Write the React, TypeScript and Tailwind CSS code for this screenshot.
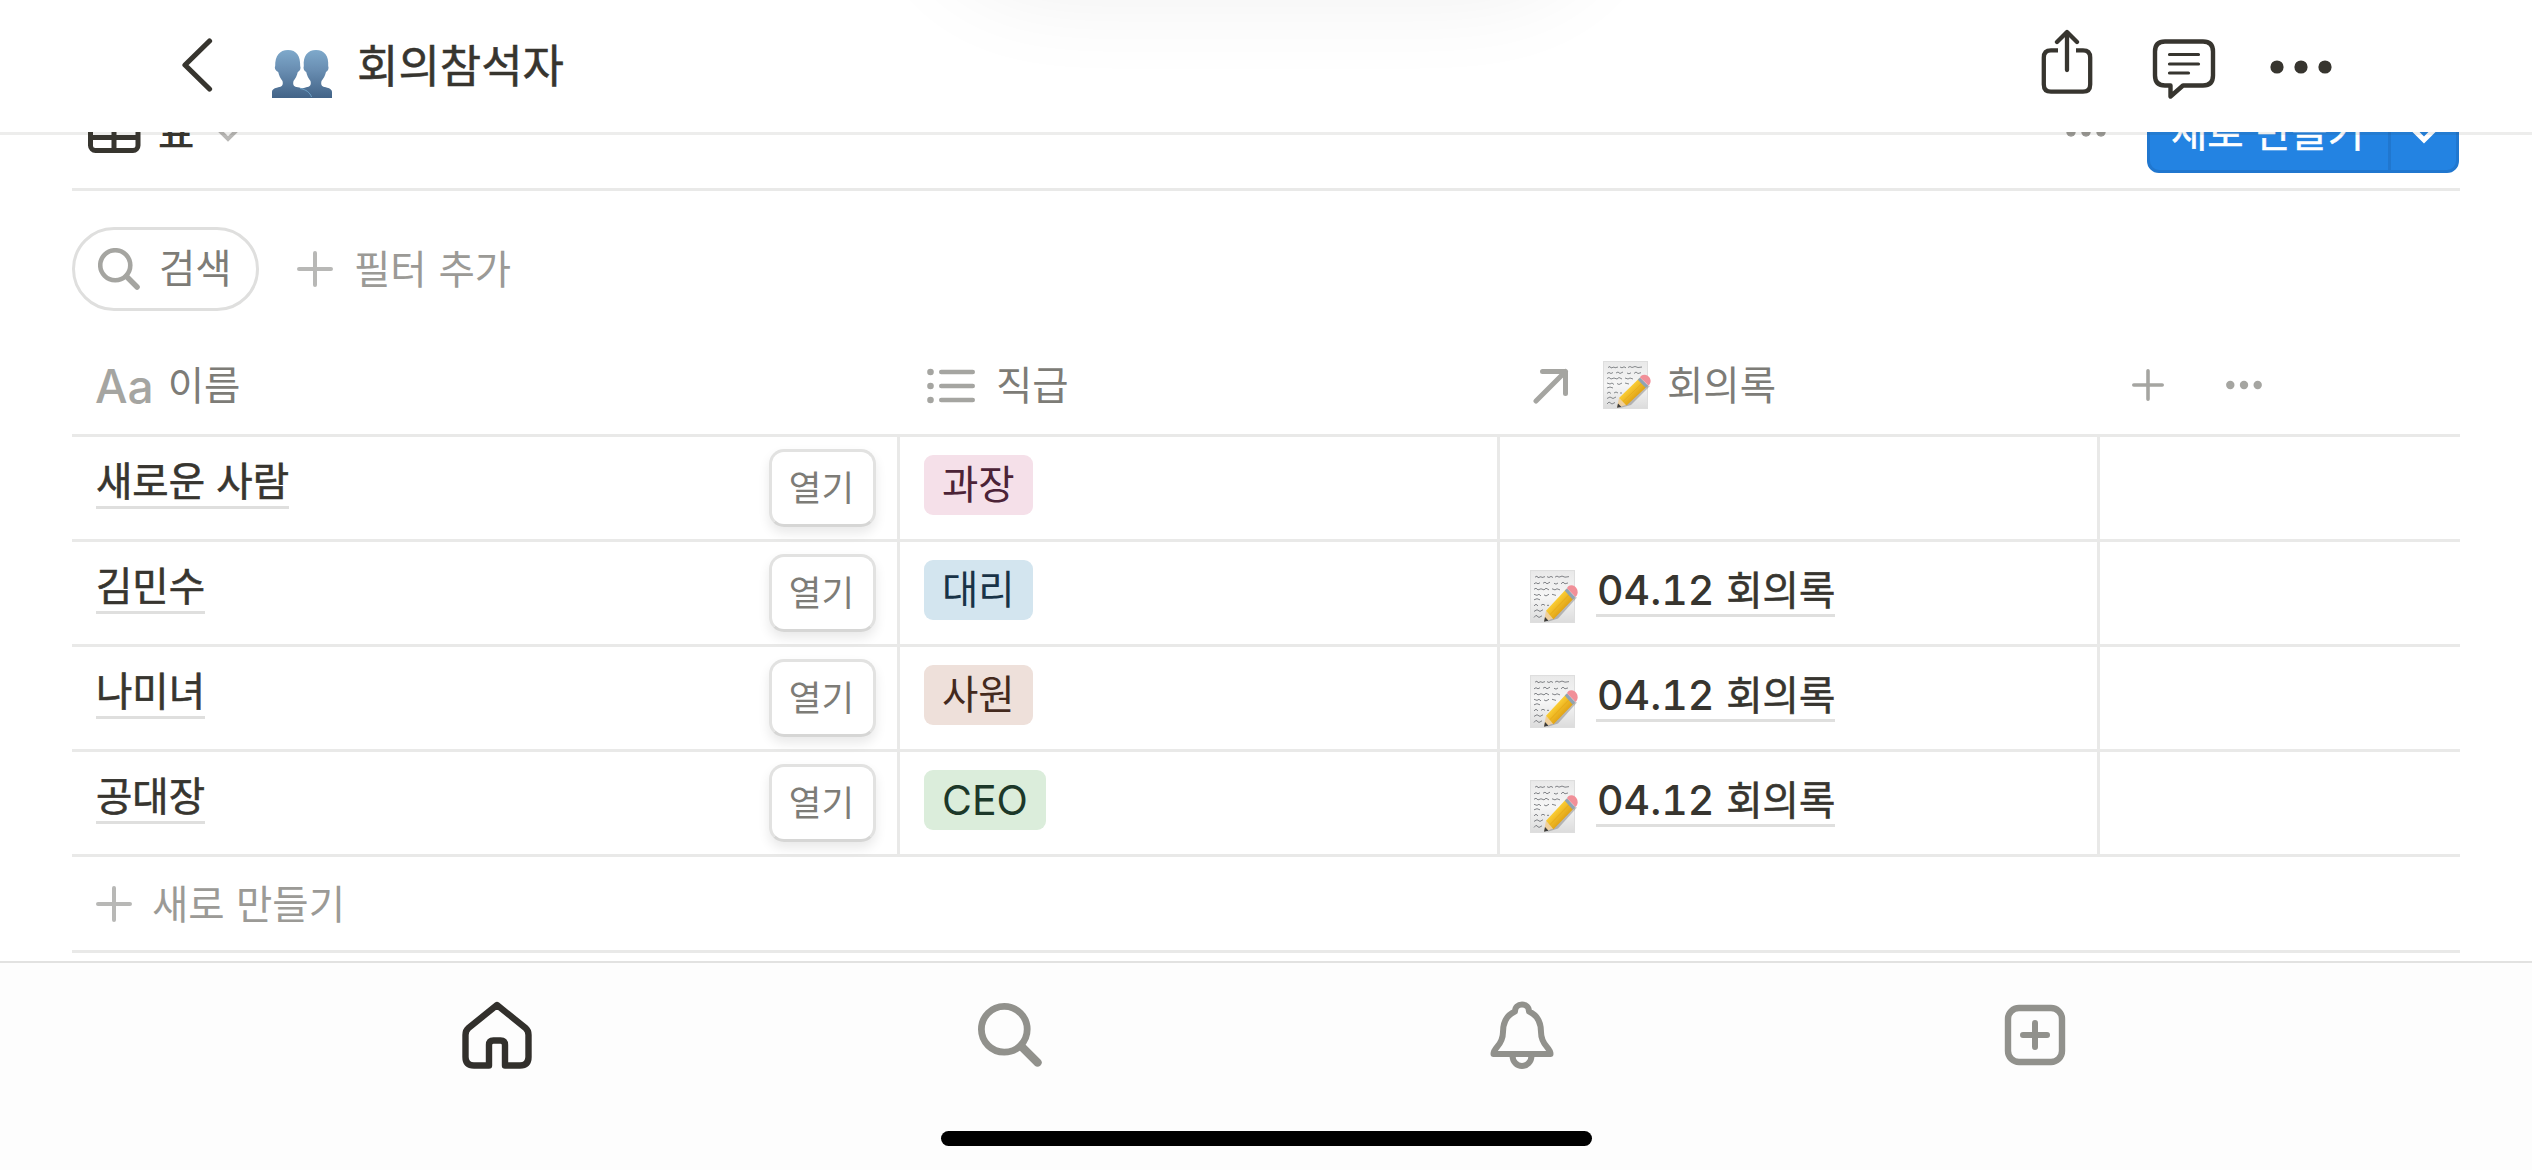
import type { ReactNode } from "react";

type Row = {
  name: string;
  tag: string;
  tagClass: string;
  meeting?: string;
};

const rows: Row[] = [
  { name: "새로운 사람", tag: "과장", tagClass: "bg-[#f5e0e9] text-[#4c2337]" },
  { name: "김민수", tag: "대리", tagClass: "bg-[#d3e5ef] text-[#183347]", meeting: "회의록" },
  { name: "나미녀", tag: "사원", tagClass: "bg-[#eee0da] text-[#442a1e]", meeting: "회의록" },
  { name: "공대장", tag: "CEO", tagClass: "bg-[#dbeddb] text-[#1c3829] text-[41px]", meeting: "회의록" },
];

const PeopleEmoji = () => (
  <svg width="60" height="48" viewBox="0 0 60 48">
    <defs>
      <linearGradient id="people" x1="0" y1="0" x2="0" y2="1">
        <stop offset="0" stopColor="#7ea9cb" />
        <stop offset="0.4" stopColor="#6a8fb3" />
        <stop offset="1" stopColor="#426387" />
      </linearGradient>
    </defs>
    <path
      fill="url(#people)"
      d="M28 48V42C28 38.5 32 38 35.500 37C38.500 36.200 39.300 34.500 38.500 31C36.500 28.500 35 25.500 34.200 22C32 21 31 18.500 31.800 16C31 6 35.500 0 44 0C52.500 0 57 6 56.200 16C57.200 18.500 56 21 54 22C53.200 25.500 51.500 28.500 49.500 31C48.700 34.500 49.500 36.200 52.500 37C56 38 60 38.500 60 42V48Z"
    />
    <path
      fill="url(#people)"
      d="M0 48V42C0 38.500 4 38 7.500 37C10.500 36.200 11.300 34.500 10.500 31C8.500 28.500 7 25.500 6.200 22C4 21 2 18.500 3.200 16C3 6 7.500 0 16 0C24.500 0 28.500 6 28.200 16C29.200 18.500 28 21 25.800 22C25 25.500 23.500 28.500 21.500 31C20.700 34.500 21.500 36.200 24.500 37C32 38 37.500 41 39.500 48Z"
    />
    <path d="M28 38.500C34 39.500 38 42.500 39.500 47" fill="none" stroke="#6fa3c9" strokeWidth="1" />
  </svg>
);

const MemoEmoji = ({ className }: { className?: string }) => (
  <svg viewBox="0 0 48 48" preserveAspectRatio="none" className={className}>
    <defs>
      <linearGradient id="pencil" x1="0" y1="0" x2="1" y2="1">
        <stop offset="0.3" stopColor="#ffd53a" />
        <stop offset="0.7" stopColor="#dd9c10" />
      </linearGradient>
      <linearGradient id="paper" x1="0" y1="0" x2="0" y2="1">
        <stop offset="0" stopColor="#e9e9e9" />
        <stop offset="0.5" stopColor="#f6f6f6" />
        <stop offset="1" stopColor="#dcdcdc" />
      </linearGradient>
    </defs>
    <rect x="0.500" y="0.500" width="44" height="47" fill="url(#paper)" stroke="#dedede" />
    <g fill="none" stroke="#6b6e72" strokeWidth="0.800">
      <path d="M5 6.500l2-1 1 1.500 3-1 1 .8 3-.8M17 6l2 .8 2-1 2 1M25 6.500l2-1 2 1 3-1 3 1 4-.5" />
      <path d="M4 12.500l2-1 2 1 2-1M13 12l2-1 2 1.500 3-1.500M24 12l2 .8 2-1M31 12.500l2-1.500 2 1.500 3-.8" />
      <path d="M4 17.500l2-1 2 1.500 3-1 3 1 2-1.500 3 1.500M22 17l3 1 2-1 3 1" />
      <path d="M4 22l3 1 2-1 2 1.500M14 22.500l2 1 3-1.500M22 22l4 1" />
      <path d="M4 27l3-1 3 1M4 32.500l2-1.500 2 1.500M11 32l2-1 2 1M17 32h2" />
      <path d="M4 37.500l3-1.500 3 1.500 3-1.500M4 43l2-2 3 2 3-1.500" />
    </g>
    <path d="M17 47L44 24L47 25L28 44Z" fill="#555" opacity="0.35" />
    <path d="M14 46.500L16 37L23.500 44Z" fill="#efcf9c" />
    <path d="M14 46.800L15 42.500L18.500 46Z" fill="#3b3b3b" />
    <path d="M16 37L36 17.500L44 25.500L23.500 44.500Z" fill="url(#pencil)" />
    <path d="M20 40.500L40 21.500" stroke="#e8ae1c" strokeWidth="1" />
    <path d="M34.800 18.800L37 16.500L45 24.500L42.800 27Z" fill="#8fa3b3" />
    <path d="M37 16.500C38 13.500 42 12.800 45 15C48 17.500 48.800 21.500 45.500 24.500Z" fill="#f18f98" />
  </svg>
);

const Plus = ({ size, className }: { size: number; className: string }) => (
  <svg width={size} height={size} viewBox="0 0 36 36" className={className}>
    <path d="M18 2V34M2 18H34" stroke="currentColor" strokeWidth="4" strokeLinecap="round" />
  </svg>
);

const SearchIcon = ({ size, className, weight }: { size: number; className?: string; weight: number }) => (
  <svg width={size} height={size} viewBox="0 0 64 64" fill="none" stroke="currentColor" className={className}>
    <circle cx="26.300" cy="26.300" r="22.900" strokeWidth={weight} />
    <path d="M43.500 43.500L59.500 59.500" strokeWidth={weight + 1.4} strokeLinecap="round" />
  </svg>
);

const TopBar = () => (
  <header className="relative z-10 flex h-[132px] shrink-0 items-center bg-white pl-[181px] shadow-[0_3px_0_rgba(55,53,47,0.09)]">
    {/* soft glow hanging from the top edge */}
    <div className="absolute left-1/2 top-0 h-[110px] w-[1000px] -translate-x-1/2 overflow-hidden">
      <div className="mx-auto -mt-[410px] h-[400px] w-[670px] rounded-[120px] shadow-[0_0_100px_rgba(0,0,0,0.075)]" />
    </div>
    <svg width="32" height="56" viewBox="0 0 32 56" fill="none" className="-mt-[2px]">
      <path d="M28.500 4L4 28L28.500 52" stroke="#37352f" strokeWidth="5.200" strokeLinecap="round" strokeLinejoin="round" />
    </svg>
    <div className="ml-[59px] mt-[16px]">
      <PeopleEmoji />
    </div>
    <h1 className="-mt-[5px] ml-[25px] text-[45px] leading-[60px] text-[#37352f] [-webkit-text-stroke:0.5px]">회의참석자</h1>
    <div className="ml-auto mr-[200px] flex items-center">
      <svg width="52" height="66" viewBox="0 0 52 66" fill="none" stroke="#37352f" strokeWidth="4.300" className="-mt-[8px]">
        <path d="M17 21.300H10Q2.800 21.300 2.800 28.500V55.500Q2.800 62.700 10 62.700H42Q49.200 62.700 49.200 55.500V28.500Q49.200 21.300 42 21.300H35" />
        <path d="M26 41V3.500M16 13L26 3L36 13" strokeLinecap="round" strokeLinejoin="round" />
      </svg>
      <svg width="64" height="60" viewBox="0 0 64 60" fill="none" stroke="#37352f" strokeLinecap="round" strokeLinejoin="round" className="ml-[59px] mt-[6px]">
        <path d="M13 2.500H51Q61 2.500 61 12.500V36.500Q61 46.500 51 46.500H31L18.500 57.500V46.500H13Q3 46.500 3 36.500V12.500Q3 2.500 13 2.500Z" strokeWidth="4.400" />
        <path d="M17.500 15.500H46.500M17.500 25H46.500M17.500 34H36.500" strokeWidth="3.200" />
      </svg>
      <svg width="62" height="14" viewBox="0 0 62 14" fill="#37352f" className="ml-[54px] mt-px">
        <circle cx="7" cy="7" r="6.600" />
        <circle cx="31" cy="7" r="6.600" />
        <circle cx="55" cy="7" r="6.600" />
      </svg>
    </div>
  </header>
);

const ViewBar = () => (
  <div className="-mt-[43px] flex h-[102px] shrink-0 items-start border-b-[3px] border-[#e9e9e8] text-[39.500px] leading-[84px]">
    <svg width="54" height="44" viewBox="0 0 54 44" fill="none" stroke="#37352f" strokeWidth="5" className="ml-[15px] mt-[20px]">
      <rect x="3.500" y="2.500" width="47.500" height="39" rx="5" />
      <path d="M3.500 15H51M3.500 28.500H51M27 15V41" />
    </svg>
    <span className="ml-[17px] font-medium text-[#37352f]">표</span>
    <svg width="26" height="16" viewBox="0 0 26 16" fill="none" stroke="#b9b8b6" strokeWidth="4" className="ml-[21px] mt-[38px]">
      <path d="M3 2L13 12L23 2" />
    </svg>
    <svg width="40" height="10" viewBox="0 0 40 10" fill="#9b9a96" className="ml-auto mr-[41px] mt-[38px]">
      <circle cx="5" cy="5" r="4.700" />
      <circle cx="20" cy="5" r="4.700" />
      <circle cx="35" cy="5" r="4.700" />
    </svg>
    <div className="mr-px flex h-[84px] w-[312px] overflow-hidden rounded-[12px] border-[3px] border-[#2077cf] bg-[#2383e2] text-white">
      <span className="-mt-[4px] w-[241px] whitespace-nowrap border-r-[3px] border-[#2077cf] pl-[21px] [-webkit-text-stroke:0.5px] [word-spacing:2.5px]">새로 만들기</span>
      <svg width="26" height="18" viewBox="0 0 26 18" fill="none" stroke="white" strokeWidth="5" className="ml-[20px] mt-[35px]">
        <path d="M3 3L13 13L23 3" />
      </svg>
    </div>
  </div>
);

const FilterBar = () => (
  <div className="mt-[36px] flex h-[84px] shrink-0 items-center text-[39.500px] leading-[60px]">
    <div className="flex h-[84px] w-[187px] items-center rounded-full border-[3px] border-[#dfdfde] pl-[23px] text-[#7d7c77]">
      <SearchIcon size={42} weight={7} className="text-[#a5a5a1]" />
      <span className="-mt-[7px] ml-[19px]">검색</span>
    </div>
    <Plus size={36} className="ml-[38px] text-[#b8b8b6]" />
    <span className="-mt-[5px] ml-[21px] text-[#9b9a96] [word-spacing:3px]">필터 추가</span>
  </div>
);

const HeaderCell = ({ icon, children, className }: { icon: ReactNode; children: ReactNode; className: string }) => (
  <div className={`flex items-center pt-px ${className}`}>
    {icon}
    <span className="-mt-[5px]">{children}</span>
  </div>
);

const TableHead = () => (
  <div className="mt-[24px] flex h-[102px] shrink-0 border-b-[3px] border-[#e9e9e8] text-[39.500px] leading-[60px] text-[#7d7c77]">
    <HeaderCell
      className="w-[828px] gap-[14px] pl-[23px]"
      icon={<span className="mt-px font-['Inter'] text-[46px] font-medium text-[#a5a5a1]">Aa</span>}
    >
      이름
    </HeaderCell>
    <HeaderCell
      className="w-[600px] gap-[21px] pl-[27px]"
      icon={
        <svg width="48" height="36" viewBox="0 0 48 36" className="mt-px text-[#a5a5a1]">
          <g fill="currentColor">
            <circle cx="3.500" cy="4" r="3.300" />
            <circle cx="3.500" cy="18" r="3.300" />
            <circle cx="3.500" cy="32" r="3.300" />
          </g>
          <path d="M14.200 4H45.800M14.200 18H45.800M14.200 32H45.800" stroke="currentColor" strokeWidth="4.400" strokeLinecap="round" />
        </svg>
      }
    >
      직급
    </HeaderCell>
    <HeaderCell
      className="w-[600px] pl-[33px]"
      icon={
        <>
          <svg width="36" height="36" viewBox="0 0 36 36" fill="none" stroke="#a5a5a1" strokeWidth="5" strokeLinecap="round" strokeLinejoin="round" className="mt-[2px]">
            <path d="M3 33L32.500 3.500M9.500 3.500H32.500V25.500" />
          </svg>
          <MemoEmoji className="-mt-px ml-[34px] mr-[16px] h-[48px] w-[48px]" />
        </>
      }
    >
      회의록
    </HeaderCell>
    <div className="flex items-center">
      <Plus size={32} className="ml-[32px] text-[#a5a5a1]" />
      <svg width="36" height="10" viewBox="0 0 36 10" fill="#a5a5a1" className="ml-[62px]">
        <circle cx="4.300" cy="5" r="4.200" />
        <circle cx="18" cy="5" r="4.200" />
        <circle cx="31.700" cy="5" r="4.200" />
      </svg>
    </div>
  </div>
);

const TableRow = ({ row }: { row: Row }) => (
  <div className="flex h-[105px] shrink-0 border-b-[3px] border-[#e9e9e8] text-[39.500px] leading-[60px]">
    <div className="flex w-[828px] items-start border-r-[3px] border-[#e9e9e8] pl-[24px] pr-[21px]">
      <span className="mt-[12px] h-[60px] border-b-[3px] border-[#dfdfde] text-[#37352f] [-webkit-text-stroke:0.6px] [word-spacing:2.5px]">
        {row.name}
      </span>
      <button className="ml-auto mt-[12px] h-[78px] w-[107px] rounded-[15px] border-[3px] border-[#e2e2e1] border-b-[#d6d6d5] bg-white pb-[5px] pr-[2px] text-[35.500px] leading-[60px] text-[#7d7c77] shadow-[0_6px_12px_rgba(15,15,15,0.09)]">
        열기
      </button>
    </div>
    <div className="flex w-[600px] items-start border-r-[3px] border-[#e9e9e8] pl-[24px] pt-[18px]">
      <span className={`h-[60px] rounded-[9px] px-[18px] font-['Inter','Noto_Sans_CJK_KR',sans-serif] leading-[60px] ${row.tagClass}`}>
        {row.tag}
      </span>
    </div>
    <div className="flex w-[600px] items-start border-r-[3px] border-[#e9e9e8] pl-[30px]">
      {row.meeting && (
        <>
          <MemoEmoji className="mt-[28px] h-[53px] w-[48px]" />
          <span className="ml-[18px] mt-[15px] h-[60px] whitespace-nowrap border-b-[3px] border-[#dfdfde] leading-[61px] text-[#37352f]">
            <span className="pl-px font-['Inter'] text-[41px] font-medium tabular-nums">04.12</span>
            <span className="ml-[12px] [-webkit-text-stroke:0.6px]">{row.meeting}</span>
          </span>
        </>
      )}
    </div>
  </div>
);

const TabBar = () => (
  <nav className="flex h-[209px] shrink-0 flex-col border-t-2 border-[#e2e2e1] bg-[#fdfdfd]">
    <div className="grid h-[143px] grid-cols-4 items-center justify-items-center px-[241px] text-[#91918c]">
      <svg width="70" height="68" viewBox="0 0 70 68" fill="none" stroke="#32302c" strokeWidth="6.400" strokeLinejoin="round">
        <path d="M35 4L6.500 27Q3.500 29.500 3.500 34V56Q3.500 64.500 12 64.500H27V44Q27 39.500 31.500 39.500H38.500Q43 39.500 43 44V64.500H58Q66.500 64.500 66.500 56V34Q66.500 29.500 63.500 27Z" />
      </svg>
      <SearchIcon size={64} weight={6.8} />
      <svg width="64" height="68" viewBox="0 0 64 68" fill="none" stroke="currentColor" strokeWidth="6" strokeLinejoin="round" strokeLinecap="round">
        <path d="M25 10.500C25 6 28 3.500 32 3.500S39 6 39 10.500C47 14 51 21 51 31C51 45 60.500 46 60.500 53H3.500C3.500 46 13 45 13 31C13 21 17 14 25 10.500Z" />
        <path d="M22.500 54.500C22.500 61 27 65 32 65S41.500 61 41.500 54.500" />
      </svg>
      <svg width="62" height="62" viewBox="0 0 62 62" fill="none" stroke="currentColor" strokeWidth="6.400">
        <rect x="4" y="4" width="54" height="54" rx="11" />
        <path d="M31 19V43M19 31H43" strokeWidth="6" strokeLinecap="round" />
      </svg>
    </div>
    <div className="mx-auto mt-[25px] h-[15px] w-[651px] rounded-full bg-black" />
  </nav>
);

export default function App() {
  return (
    <div className="flex h-[1170px] w-[2532px] flex-col overflow-hidden bg-white font-['Noto_Sans_CJK_KR',sans-serif]">
      <TopBar />
      <main className="flex h-[829px] shrink-0 flex-col overflow-hidden px-[72px]">
        <ViewBar />
        <FilterBar />
        <TableHead />
        {rows.map((row) => (
          <TableRow key={row.name} row={row} />
        ))}
        <div className="flex h-[96px] shrink-0 items-center border-b-[3px] border-[#e9e9e8] pl-[24px] pt-px text-[39.500px] leading-[60px] text-[#9b9a96]">
          <Plus size={36} className="text-[#b8b8b6]" />
          <span className="-mt-[5px] ml-[20px] [word-spacing:2.5px]">새로 만들기</span>
        </div>
      </main>
      <TabBar />
    </div>
  );
}
